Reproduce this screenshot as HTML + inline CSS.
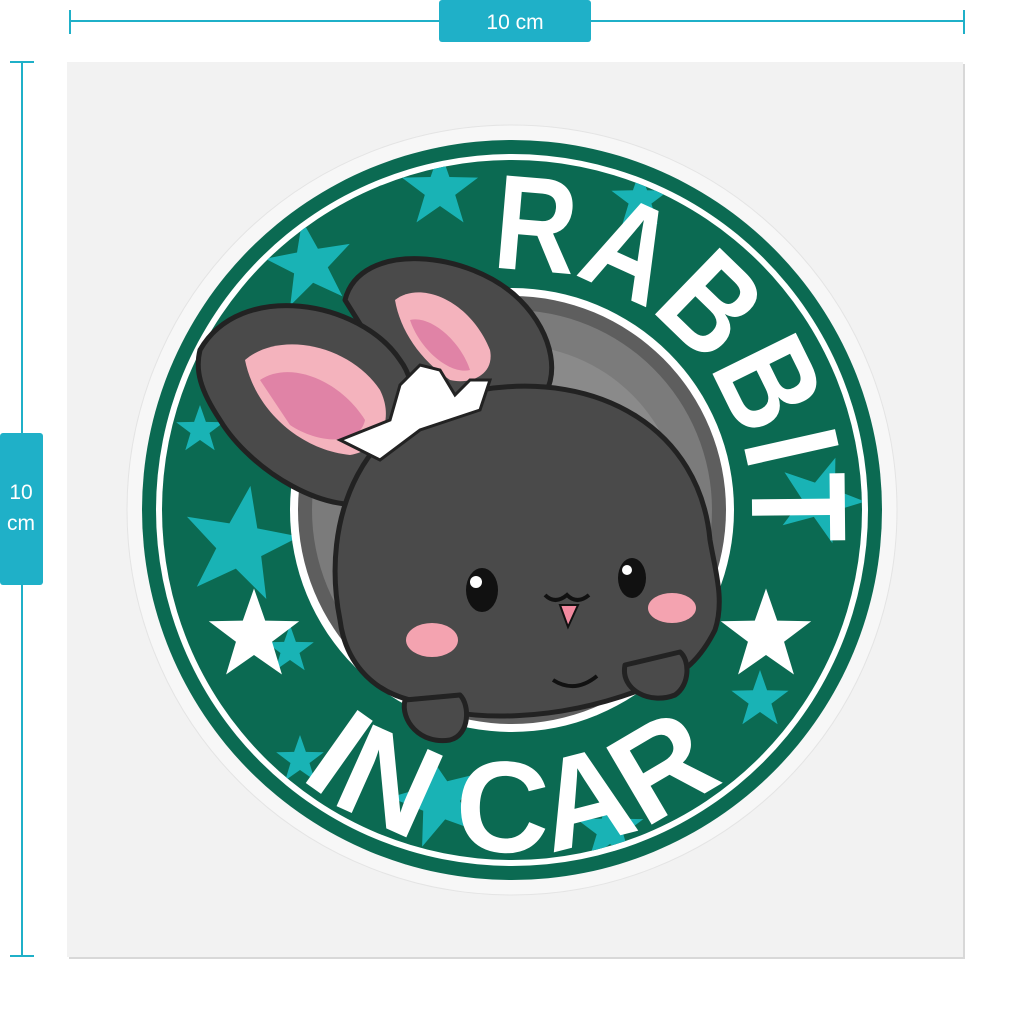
<!DOCTYPE html>
<html><head><meta charset="utf-8"><style>
html,body{margin:0;padding:0;background:#fff;width:1024px;height:1024px;overflow:hidden}
svg{display:block}
</style></head><body>
<svg width="1024" height="1024" viewBox="0 0 1024 1024" xmlns="http://www.w3.org/2000/svg">
<defs>
<path id="topArc" d="M 272 510 A 240 240 0 0 1 752 510 A 240 240 0 0 1 720 630" />
<path id="botArc" d="M 512 510 m -342 0 a 342 342 0 0 0 684 0" />
<clipPath id="ring"><circle cx="512" cy="510" r="350"/></clipPath>
<polygon id="star" points="0,-50 11.8,-16.2 47.6,-15.5 19,6.1 29.4,40.5 0,20 -29.4,40.5 -19,6.1 -47.6,-15.5 -11.8,-16.2"/>
</defs>
<g stroke="#1fb0c8" stroke-width="2">
<line x1="70" y1="21" x2="964" y2="21"/><line x1="70" y1="10" x2="70" y2="34"/><line x1="964" y1="10" x2="964" y2="34"/>
<line x1="22" y1="62" x2="22" y2="956"/><line x1="10" y1="62" x2="34" y2="62"/><line x1="10" y1="956" x2="34" y2="956"/>
</g>
<rect x="439" y="0" width="152" height="42" rx="3" fill="#1fb0c8"/>
<text x="515" y="29" fill="#fff" font-family="Liberation Sans,sans-serif" font-size="21" text-anchor="middle">10 cm</text>
<rect x="0" y="433" width="43" height="152" rx="3" fill="#1fb0c8"/>
<text x="21" y="499" fill="#fff" font-family="Liberation Sans,sans-serif" font-size="21" text-anchor="middle">10</text>
<text x="21" y="530" fill="#fff" font-family="Liberation Sans,sans-serif" font-size="21" text-anchor="middle">cm</text>
<rect x="69" y="64" width="896" height="895" fill="#d8d8d8"/>
<rect x="67" y="62" width="896" height="895" fill="#f2f2f2"/>
<circle cx="512" cy="510" r="385" fill="#f7f7f7" stroke="#e4e4e4" stroke-width="1"/>
<circle cx="512" cy="510" r="370" fill="#0b6a52"/>
<circle cx="512" cy="510" r="356" fill="#fff"/>
<circle cx="512" cy="510" r="350" fill="#0b6a52"/>
<g clip-path="url(#ring)" fill="#19b3b5">
<use href="#star" transform="translate(240,545) scale(1.2) rotate(10)"/>
<use href="#star" transform="translate(310,265) scale(0.9) rotate(-10)"/>
<use href="#star" transform="translate(440,190) scale(0.8)"/>
<use href="#star" transform="translate(640,200) scale(0.6)"/>
<use href="#star" transform="translate(820,500) scale(0.9) rotate(20)"/>
<use href="#star" transform="translate(440,800) scale(1.0) rotate(-15)"/>
<use href="#star" transform="translate(610,830) scale(0.7)"/>
<use href="#star" transform="translate(290,650) scale(0.5)"/>
<use href="#star" transform="translate(200,430) scale(0.5)"/>
<use href="#star" transform="translate(760,700) scale(0.6)"/>
<use href="#star" transform="translate(300,760) scale(0.5)"/>
</g>
<circle cx="512" cy="510" r="222" fill="#fff"/>
<circle cx="512" cy="510" r="214" fill="#5e5e5e"/>
<circle cx="512" cy="510" r="200" fill="#7b7b7b"/>
<circle cx="512" cy="515" r="170" fill="#8a8a8a"/>
<g fill="#fff">
<use href="#star" transform="translate(254,636) scale(0.95)"/>
<use href="#star" transform="translate(766,636) scale(0.95)"/>
</g>
<text font-family="Liberation Sans,sans-serif" font-weight="bold" font-size="135" fill="#fff">
<textPath href="#topArc" startOffset="356" textLength="430" lengthAdjust="spacingAndGlyphs">RABBIT</textPath></text>
<text font-family="Liberation Sans,sans-serif" font-weight="bold" font-size="130" fill="#fff" letter-spacing="2">
<textPath href="#botArc" startOffset="50%" text-anchor="middle">IN CAR</textPath></text>
<g stroke="#222" stroke-width="5" stroke-linejoin="round">
<path d="M345 300 C 360 240 470 250 520 300 C 555 335 560 380 540 400 L 420 420 Z" fill="#4a4a4a"/>
<path d="M200 350 C 240 280 360 300 400 360 C 430 400 400 460 380 500 C 330 520 250 470 220 420 C 200 390 195 370 200 350 Z" fill="#4a4a4a"/>
<path d="M340 620 C 320 520 360 410 480 390 C 600 370 700 430 710 540 C 715 570 725 600 715 630 C 700 660 680 680 640 690 C 560 720 470 725 410 700 C 370 690 345 660 340 620 Z" fill="#4a4a4a"/>
<path d="M405 700 C 400 720 420 745 450 740 C 470 735 470 705 460 695 Z" fill="#4a4a4a"/>
<path d="M625 665 C 620 690 650 705 675 695 C 690 685 690 660 680 652 Z" fill="#4a4a4a"/>
</g>
<path d="M245 360 C 280 330 350 345 380 390 C 395 420 380 450 350 455 C 300 450 255 410 245 360 Z" fill="#f4b3bd"/>
<path d="M260 380 C 290 360 340 380 365 420 C 360 445 320 445 290 425 Z" fill="#e083a6"/>
<path d="M395 300 C 420 280 470 300 490 350 C 495 375 470 385 450 380 C 420 360 400 330 395 300 Z" fill="#f4b3bd"/>
<path d="M410 320 C 430 315 460 340 470 370 C 450 375 420 350 410 320 Z" fill="#e083a6"/>
<path d="M340 440 L 390 420 L 400 385 L 420 365 L 440 370 L 455 395 L 470 380 L 490 380 L 480 410 L 420 430 L 380 460 Z" fill="#fff" stroke="#222" stroke-width="3"/>
<ellipse cx="482" cy="590" rx="16" ry="22" fill="#111"/>
<circle cx="476" cy="582" r="6" fill="#fff"/>
<ellipse cx="632" cy="578" rx="14" ry="20" fill="#111"/>
<circle cx="627" cy="570" r="5" fill="#fff"/>
<ellipse cx="432" cy="640" rx="26" ry="17" fill="#f4a3b0"/>
<ellipse cx="672" cy="608" rx="24" ry="15" fill="#f4a3b0"/>
<path d="M545 595 q10 10 22 0 q10 10 22 0" stroke="#111" stroke-width="4" fill="none"/>
<path d="M560 605 l8 22 l10 -22 Z" fill="#f28aa0" stroke="#111" stroke-width="2"/>
<path d="M553 680 q22 14 44 -4" stroke="#111" stroke-width="4" fill="none"/>
</svg>
</body></html>
